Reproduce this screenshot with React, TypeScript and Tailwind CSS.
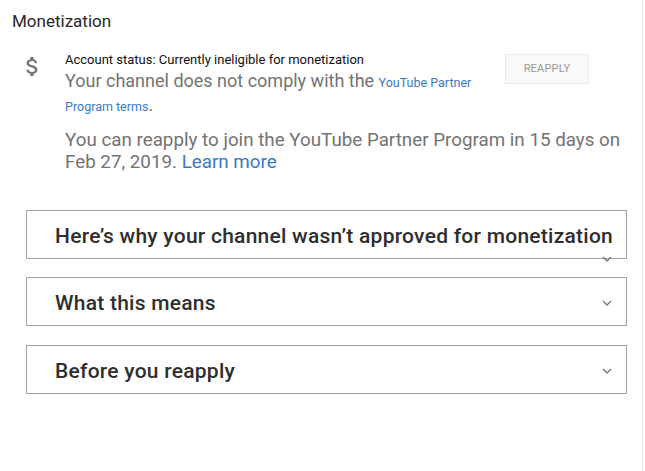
import React from "react";

const Chevron = () => (
  <svg width="12" height="8" viewBox="0 0 12 8" fill="none">
    <polyline points="2,2 6,6 10,2" stroke="#7a7a7a" strokeWidth="1.4" />
  </svg>
);

export default function App() {
  return (
    <div className="flex w-[645px] h-[471px] bg-white overflow-hidden" style={{ fontFamily: "Roboto, 'Noto Sans', sans-serif" }}>
      <div className="w-[642px] h-full flex flex-col">
        <div className="pl-[12px] pt-[11px] text-[17px] leading-[20px] text-[#282828]">Monetization</div>
        <div className="flex mt-[21px]">
          <div className="ml-[19px] w-[26px] pt-[5px] flex justify-center">
            <svg width="13" height="19" viewBox="6 3 12 18" preserveAspectRatio="none">
              <path
                fill="#737373"
                d="M11.8 10.9c-2.27-.59-3-1.2-3-2.150 0-1.09 1.01-1.85 2.7-1.85 1.78 0 2.44.85 2.5 2.1h2.21c-.07-1.72-1.12-3.3-3.21-3.81V3h-3v2.16c-1.94.42-3.5 1.68-3.5 3.61 0 2.310 1.91 3.46 4.7 4.13 2.5.6 3 1.48 3 2.41 0 .69-.49 1.79-2.7 1.79-2.060 0-2.87-.92-2.98-2.1h-2.2c.12 2.19 1.76 3.42 3.68 3.83V21h3v-2.15c1.95-.37 3.5-1.5 3.5-3.55 0-2.84-2.43-3.81-4.5-4.4z"
              />
            </svg>
          </div>
          <div className="ml-[20px] w-[430px]">
            <div className="text-[13px] leading-[16px] text-[#111]">Account status: Currently ineligible for monetization</div>
            <p className="mt-[1px] text-[18px] leading-[24px] text-[#737373]">
              Your channel does not comply with the{" "}
              <span className="text-[12.5px] leading-none text-[#3b78c2]">YouTube Partner Program terms</span>
              .
            </p>
          </div>
          <div className="ml-[10px] mt-[2px] w-[84px] h-[30px] flex items-center justify-center border border-[#ececec] bg-[#f9f9f9] text-[11px] text-[#9a9a9a] tracking-[0.2px]">
            REAPPLY
          </div>
        </div>
        <p className="mt-[12px] pl-[65px] pr-[16px] text-[18.8px] leading-[22px] text-[#737373]">
          You can reapply to join the YouTube Partner Program in 15 days on Feb 27, 2019.{" "}
          <span className="text-[#3b78c2]">Learn more</span>
        </p>
        <div className="ml-[26px] w-[601px] mt-[37px] flex flex-col">
          <div className="relative h-[49px] border border-[#a3a3a3] flex items-center pl-[28px] pt-[2px]">
            <span className="text-[21px] leading-[28px] font-medium tracking-[0.25px] text-[#2e2e2e] whitespace-nowrap">
              Here’s why your channel wasn’t approved for monetization
            </span>
            <div className="absolute right-[13px] bottom-[-5px] flex">
              <Chevron />
            </div>
          </div>
          <div className="mt-[18px] h-[49px] border border-[#a3a3a3] flex items-center justify-between pl-[28px] pr-[13px] pt-[2px]">
            <span className="text-[21px] leading-[28px] font-medium tracking-[0.25px] text-[#2e2e2e]">What this means</span>
            <Chevron />
          </div>
          <div className="mt-[19px] h-[49px] border border-[#a3a3a3] flex items-center justify-between pl-[28px] pr-[13px] pt-[2px]">
            <span className="text-[21px] leading-[28px] font-medium tracking-[0.25px] text-[#2e2e2e]">Before you reapply</span>
            <Chevron />
          </div>
        </div>
      </div>
      <div className="w-[1px] h-full bg-[#e6e6e6]" />
      <div className="w-[2px] h-full bg-white" />
    </div>
  );
}
